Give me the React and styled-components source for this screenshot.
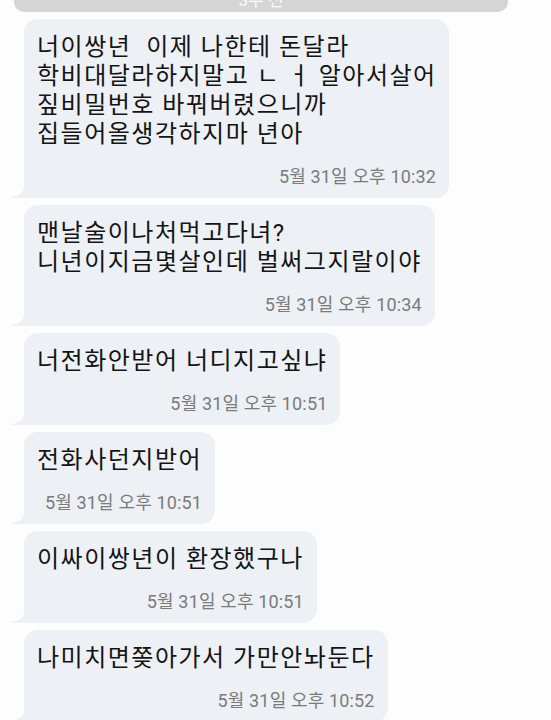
import React from "react"
import styled, { createGlobalStyle } from "styled-components"

const GlobalStyle = createGlobalStyle`
  html, body {
    margin: 0;
    padding: 0;
    background: #fdfdfd;
  }
  body {
    font-family: Roboto, "Noto Sans CJK KR", sans-serif;
    width: 551px;
    height: 720px;
    overflow: hidden;
  }
`

const Screen = styled.div`
  display: flex;
  flex-direction: column;
  align-items: flex-start;
`

const DateBar = styled.div`
  align-self: stretch;
  margin: -14px 43px 0 14px;
  height: 26px;
  background: #d5d5d5;
  border-radius: 0 0 10px 10px;
  display: flex;
  justify-content: center;
  align-items: flex-end;
  color: #fafafa;
  font-size: 17px;
  line-height: 20px;
  padding-bottom: 2px;
  box-sizing: border-box;
`

const Thread = styled.div`
  display: flex;
  flex-direction: column;
  align-items: flex-start;
  gap: 7px;
  padding: 7px 0 0 24px;
`

const Bubble = styled.div`
  position: relative;
  background: #edf0f4;
  border-radius: 14px 14px 14px 0;
  padding: 14px 13px 10px 13px;
  box-sizing: border-box;
  width: ${props => (props.$width ? props.$width + "px" : "auto")};

  &::before {
    content: "";
    position: absolute;
    left: -12px;
    bottom: 0;
    width: 20px;
    height: 14px;
    background: #edf0f4;
  }

  &::after {
    content: "";
    position: absolute;
    left: -16px;
    bottom: 1px;
    width: 16px;
    height: 16px;
    background: #fdfdfd;
    border-bottom-right-radius: 14px 10px;
  }
`

const Message = styled.div`
  position: relative;
  z-index: 1;
  color: #141414;
  font-size: 24px;
  line-height: 29px;
  letter-spacing: 1.5px;
  white-space: pre;
`

const Stamp = styled.div`
  position: relative;
  z-index: 1;
  text-align: right;
  color: #7b7b7b;
  font-size: 18px;
  line-height: 22px;
  letter-spacing: 0.15px;
  margin-top: 17px;
`

const messages = [
  {
    text: "너이쌍년  이제 나한테 돈달라\n학비대달라하지말고 ㄴ ㅓ 알아서살어\n짚비밀번호 바꿔버렸으니까\n집들어올생각하지마 년아",
    time: "5월 31일 오후 10:32",
    width: 425,
  },
  {
    text: "맨날술이나처먹고다녀?\n니년이지금몇살인데 벌써그지랄이야",
    time: "5월 31일 오후 10:34",
  },
  { text: "너전화안받어 너디지고싶냐", time: "5월 31일 오후 10:51" },
  { text: "전화사던지받어", time: "5월 31일 오후 10:51" },
  { text: "이싸이쌍년이 환장했구나", time: "5월 31일 오후 10:51" },
  { text: "나미치면쫒아가서 가만안놔둔다", time: "5월 31일 오후 10:52" },
]

export default function App() {
  return (
    <Screen>
      <GlobalStyle />
      <DateBar>3주 전</DateBar>
      <Thread>
        {messages.map((m, i) => (
          <Bubble key={i} $width={m.width}>
            <Message>{m.text}</Message>
            <Stamp>{m.time}</Stamp>
          </Bubble>
        ))}
      </Thread>
    </Screen>
  )
}
